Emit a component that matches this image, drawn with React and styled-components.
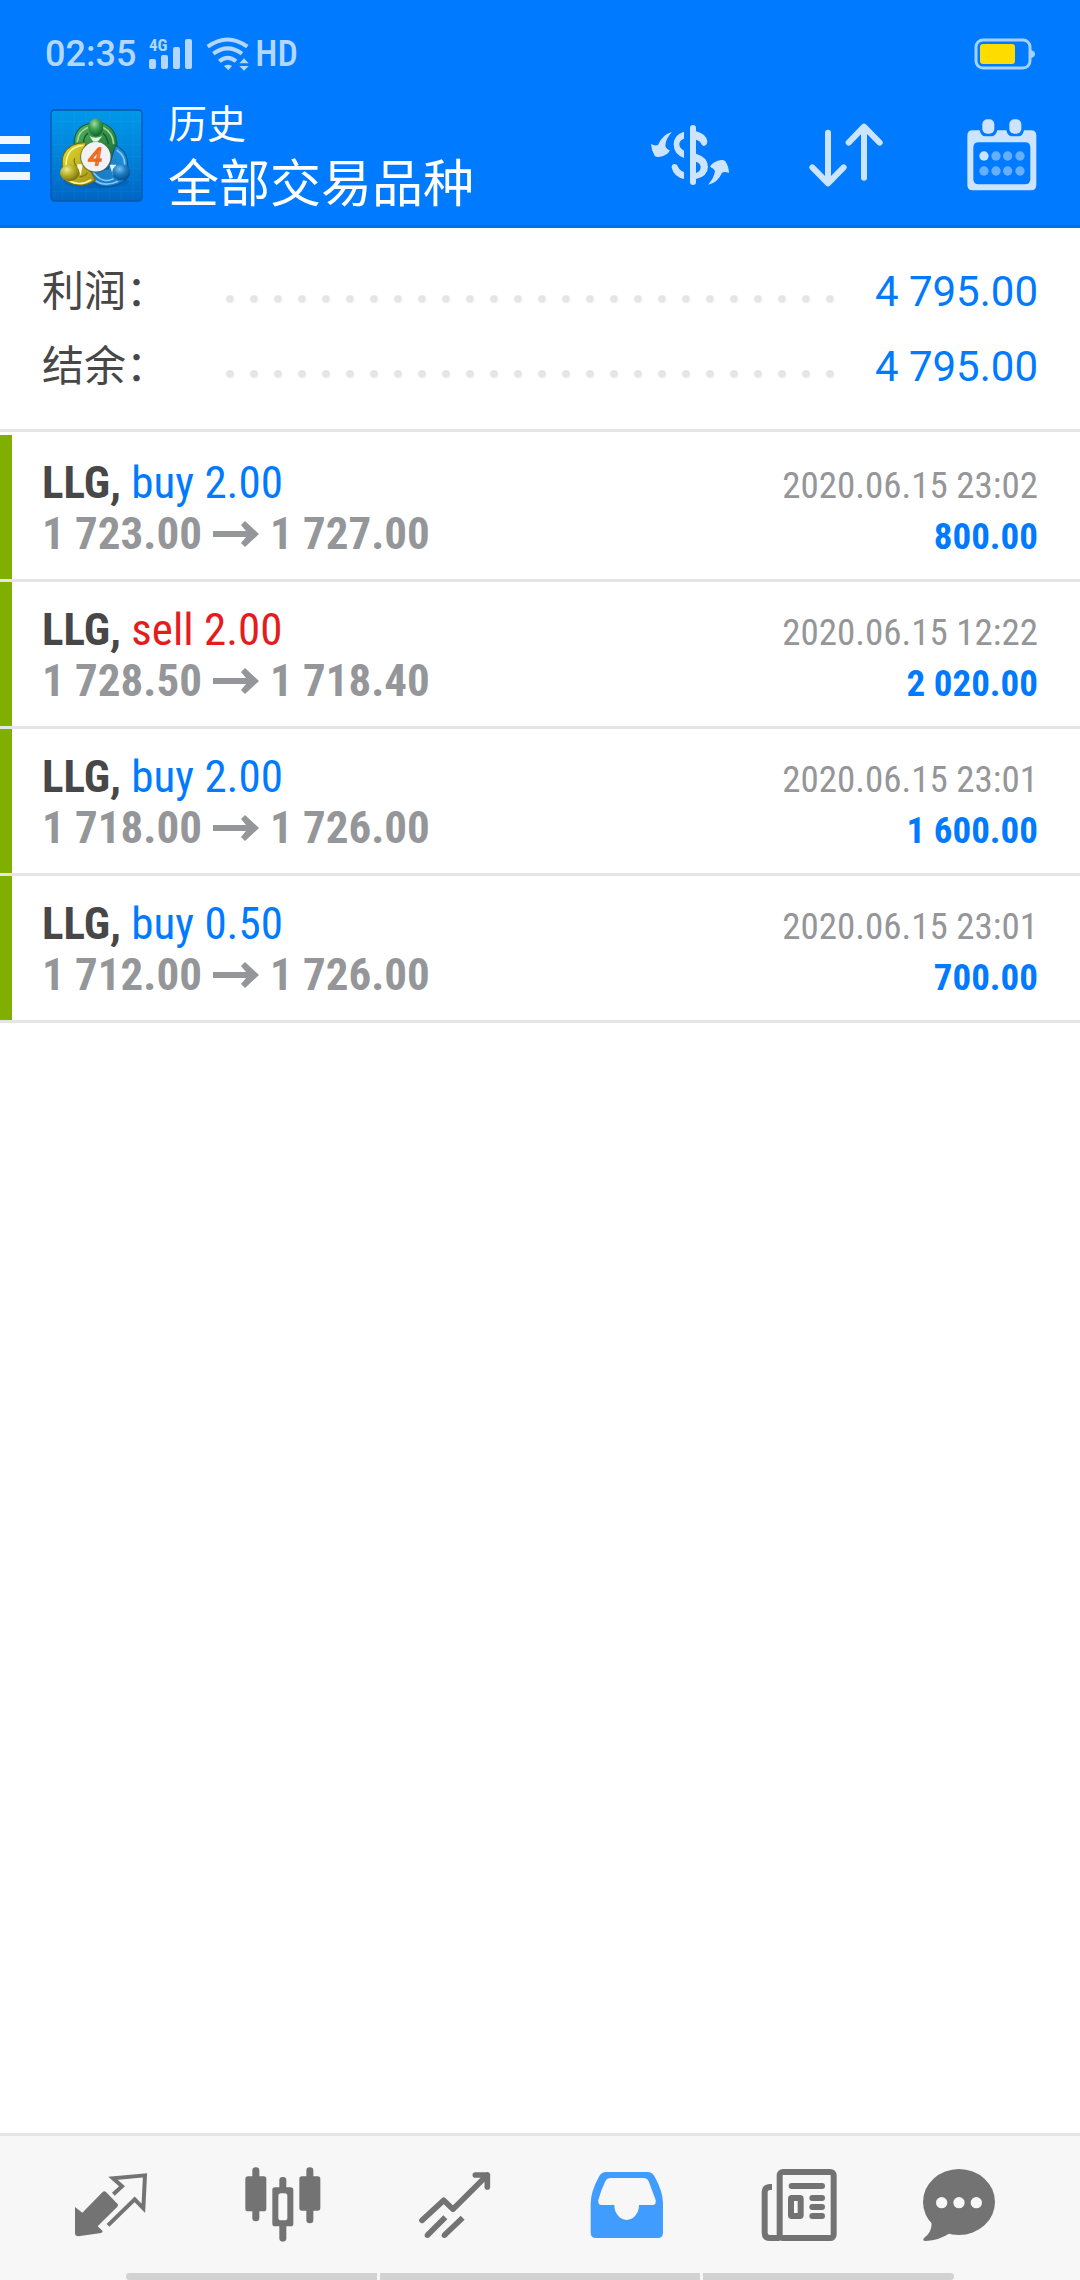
import React, { useState } from "react";
import styled, { createGlobalStyle } from "styled-components";

const condensed = `"Roboto Condensed", "Liberation Sans Narrow", Roboto, sans-serif`;

const GlobalStyle = createGlobalStyle`
  * {
    box-sizing: border-box;
  }

  body {
    margin: 0;
    background: #fff;
    font-family: Roboto, "Noto Sans CJK SC", sans-serif;
  }
`;

const Page = styled.div`
  display: flex;
  flex-direction: column;
  min-height: 100vh;
`;

const Header = styled.header`
  background: #007aff;
  border-bottom: 3px solid #006fe8;
  color: #fff;
`;

const StatusBar = styled.div`
  display: flex;
  align-items: center;
  height: 85px;
  padding: 23px 45px 0 45px;
  color: #b3d7ff;
  font-size: 36px;
  font-weight: 500;
  line-height: 44px;

  svg {
    display: block;
  }
`;

const Clock = styled.time`
  margin-right: 13px;
`;

const Signal = styled.svg`
  margin-right: 11px;
`;

const Network = styled.span`
  flex: 1;
  margin-left: 6px;
  font-family: ${condensed};
  font-weight: 500;
`;

const Toolbar = styled.div`
  display: flex;
  align-items: center;
  height: 140px;
  padding-right: 38px;
`;

const IconButton = styled.button`
  display: flex;
  align-items: center;
  justify-content: center;
  width: 80px;
  height: 96px;
  padding: 0;
  border: 0;
  background: none;
  color: ${props => props.$color || "#cce4ff"};
  cursor: pointer;
`;

const MenuButton = styled(IconButton)`
  width: 30px;
  padding-top: 6px;
`;

const Logo = styled.svg`
  display: block;
  margin: 0 25px 0 20px;
`;

const Titles = styled.div`
  flex: 1;
`;

const Title = styled.h1`
  margin: 0;
  font-size: 39px;
  font-weight: 400;
  line-height: 60px;
`;

const Subtitle = styled.p`
  margin: 0;
  font-size: 51px;
  line-height: 60px;
`;

const Actions = styled.div`
  display: flex;
  gap: 76px;
`;

const Summary = styled.dl`
  margin: 0;
  padding: 26px 42px 25px;
  border-bottom: 3px solid #e5e5e5;
`;

const SummaryRow = styled.div`
  display: flex;
  align-items: center;
  height: 75px;
  font-size: 42px;
  line-height: 60px;

  dt {
    width: 176px;
    color: #474747;
  }

  dd {
    margin: 0 0 0 32px;
    color: #007aff;
  }
`;

const Dots = styled.span`
  flex: 1;
  height: 8px;
  margin-top: 14px;
  background: radial-gradient(circle, #e5e5e5 3px, transparent 5px) 0 0 / 24px
    8px repeat-x;
`;

const Deals = styled.ul`
  flex: 1;
  margin: 0;
  padding: 3px 0 0;
  list-style: none;
`;

const Deal = styled.li`
  border-bottom: 3px solid #e5e5e5;
`;

const DealBody = styled.div`
  padding: 22px 42px 20px 30px;
  border-left: 12px solid #7fb000;
  font-family: ${condensed};
`;

const Line = styled.div`
  display: flex;
  align-items: baseline;
  justify-content: space-between;
  height: 51px;
  font-size: 45px;
  line-height: 51px;
`;

const Symbol = styled.strong`
  color: #474747;
`;

const Side = styled.span`
  color: ${props => (props.$sell ? "#e51c1c" : "#007aff")};
`;

const Prices = styled.strong`
  display: flex;
  align-items: center;
  gap: 11px;
  color: #959699;
`;

const Time = styled.time`
  color: #959699;
  font-size: 37px;
`;

const Profit = styled.strong`
  color: #007aff;
  font-size: 37px;
`;

const BottomBar = styled.footer`
  border-top: 3px solid #e5e5e5;
  background: #f7f7f7;
`;

const Tabs = styled.nav`
  display: grid;
  grid-template-columns: repeat(5, 172fr) 148fr;
  justify-items: center;
  padding: 21px 47px 20px 25px;
`;

const GestureBar = styled.div`
  display: grid;
  grid-template-columns: 251fr 320fr 251fr;
  gap: 3px;
  height: 7px;
  margin: 0 126px;
  border-radius: 4px;
  overflow: hidden;

  span {
    background: #d2d2d2;
  }
`;

const SignalIcon = () => (
  <Signal width="46" height="44" viewBox="0 -6 46 44" fill="currentColor">
    <text x="0" y="13" fontSize="17" fontWeight="700" fontFamily="Roboto Condensed, Roboto">
      4G
    </text>
    <rect x="0" y="21" width="7" height="10" rx="2" />
    <rect x="12" y="17" width="7" height="14" rx="2" />
    <rect x="24" y="9" width="7" height="22" rx="2" />
    <rect x="36" y="1" width="7" height="30" rx="2" />
  </Signal>
);

const WifiIcon = () => (
  <svg width="43" height="34" viewBox="611 52 129 102">
    <g fill="none" stroke="currentColor" strokeWidth="12">
      <path d="M616 81Q676 38 735 81" />
      <path d="M633 102Q676 70 719 102" />
      <path d="M651 125Q676 104 701 125" />
    </g>
    <g fill="currentColor">
      <path d="M665 139Q677 131 689 139L678 152Z" />
      <path d="M711 131L725 116L739 131ZM711 139L725 153L739 139Z" />
    </g>
  </svg>
);

const BatteryIcon = () => (
  <svg width="61" height="32" viewBox="0 0 61 32">
    <rect
      x="2"
      y="2"
      width="54"
      height="28"
      rx="7"
      fill="none"
      stroke="#a6d0ff"
      strokeWidth="3"
    />
    <path d="M57 12Q61 13 61 16T57 20Z" fill="#a6d0ff" />
    <rect x="6" y="6" width="35" height="20" rx="3" fill="#ffdc00" />
  </svg>
);

const MenuIcon = () => (
  <svg width="30" height="44" viewBox="0 0 30 44" fill="#f0f7ff">
    <rect y="0" width="30" height="8" />
    <rect y="18" width="30" height="8" />
    <rect y="36" width="30" height="8" />
  </svg>
);

const AppLogo = () => (
  <Logo width="93" height="93" viewBox="12 13 278 278">
    <defs>
      <linearGradient id="logoSky" x1="0" y1="0" x2="0" y2="1">
        <stop offset="0" stopColor="#0098ea" />
        <stop offset="0.5" stopColor="#0083da" />
        <stop offset="1" stopColor="#0065c4" />
      </linearGradient>
      <linearGradient id="logoGreen" x1="0" y1="0" x2="1" y2="1">
        <stop offset="0" stopColor="#5db262" />
        <stop offset="1" stopColor="#127030" />
      </linearGradient>
      <linearGradient id="logoYellow" x1="0" y1="0" x2="1" y2="1">
        <stop offset="0" stopColor="#e6dc2c" />
        <stop offset="1" stopColor="#a0901a" />
      </linearGradient>
      <linearGradient id="logoBlue" x1="1" y1="0" x2="0" y2="1">
        <stop offset="0" stopColor="#2291da" />
        <stop offset="1" stopColor="#1673bd" />
      </linearGradient>
      <radialGradient id="headGreen" cx="0.4" cy="0.3" r="0.7">
        <stop offset="0" stopColor="#a4dba0" />
        <stop offset="0.5" stopColor="#3a9c50" />
        <stop offset="1" stopColor="#0f672f" />
      </radialGradient>
      <radialGradient id="headYellow" cx="0.35" cy="0.3" r="0.7">
        <stop offset="0" stopColor="#eeea8a" />
        <stop offset="0.5" stopColor="#b9b02b" />
        <stop offset="1" stopColor="#7b7312" />
      </radialGradient>
      <radialGradient id="headBlue" cx="0.4" cy="0.3" r="0.7">
        <stop offset="0" stopColor="#75c1ee" />
        <stop offset="0.5" stopColor="#1f7cc3" />
        <stop offset="1" stopColor="#07508f" />
      </radialGradient>
    </defs>
    <rect
      x="15"
      y="16"
      width="272"
      height="272"
      rx="11"
      fill="url(#logoSky)"
      stroke="#0557ad"
      strokeWidth="4"
    />
    <path
      d="M50 18V286M85 18V286M120 18V286M155 18V286M190 18V286M225 18V286M260 18V286M17 50H285M17 85H285M17 120H285M17 155H285M17 190H285M17 225H285M17 260H285"
      stroke="#fff"
      strokeOpacity="0.06"
      strokeWidth="2"
    />
    <ellipse cx="150" cy="230" rx="98" ry="20" fill="#004f9e" fillOpacity="0.35" />
    <path
      d="M84 118Q84 66 130 56H170Q212 70 212 122Q212 146 194 168L112 150Q86 140 84 118Z"
      fill="url(#logoGreen)"
      stroke="#0c5f35"
      strokeWidth="3"
    />
    <path
      d="M94 110Q97 80 124 69M172 69Q200 84 202 116"
      fill="none"
      stroke="#a0d99a"
      strokeWidth="5"
      strokeLinecap="round"
    />
    <path
      d="M126 85Q112 96 112 116M170 85Q184 98 186 118"
      fill="none"
      stroke="#0d6030"
      strokeWidth="4"
    />
    <path
      d="M208 122Q246 140 244 184Q260 216 222 234Q176 258 142 232Q122 214 118 192H186Z"
      fill="url(#logoBlue)"
      stroke="#0b5297"
      strokeWidth="3"
    />
    <path
      d="M213 137Q236 152 235 178M132 212Q164 252 214 230M142 203Q168 238 200 222"
      fill="none"
      stroke="#7bc8f2"
      strokeWidth="5"
      strokeLinecap="round"
    />
    <path
      d="M120 114Q72 112 53 148Q45 170 51 190Q40 217 63 230Q104 254 148 226L134 200L108 160Z"
      fill="url(#logoYellow)"
      stroke="#736b13"
      strokeWidth="3"
    />
    <path
      d="M110 122Q61 126 60 180M72 229Q104 244 134 225"
      fill="none"
      stroke="#fbf59b"
      strokeWidth="5"
      strokeLinecap="round"
    />
    <path
      d="M86 160Q80 172 92 184M100 215Q112 218 124 204"
      fill="none"
      stroke="#827916"
      strokeWidth="4"
    />
    <path d="M130 94Q148 104 168 94L154 112H142Z" fill="#def5df" />
    <path d="M92 178L110 178L104 212Z" fill="#fbfae0" />
    <path d="M190 180L210 180L200 210Z" fill="#e0f3ff" />
    <ellipse cx="149" cy="68" rx="22" ry="27" fill="url(#headGreen)" />
    <ellipse cx="71" cy="204" rx="29" ry="25" fill="url(#headYellow)" />
    <ellipse cx="225" cy="202" rx="27" ry="24" fill="url(#headBlue)" />
    <circle cx="149" cy="157" r="47" fill="#4d5633" fillOpacity="0.6" />
    <circle cx="149" cy="156" r="44" fill="#f1f1f6" />
    <text
      x="147"
      y="181"
      textAnchor="middle"
      fontFamily="Roboto"
      fontSize="74"
      fontStyle="italic"
      fill="#ffa63e"
      stroke="#e8651a"
      strokeWidth="4"
    >
      4
    </text>
  </Logo>
);

const CurrencyIcon = () => (
  <svg width="80" height="62" viewBox="90 309 240 186" fill="currentColor">
    <rect x="210" y="312" width="18" height="180" rx="9" />
    <path d="M192 332V353Q178 358 178 370Q178 382 192 389V411Q161 400 161 370Q161 341 192 332Z" />
    <path d="M192 474V453Q179 449 174 437Q172 429 164 429Q154 430 155 440Q162 467 192 474Z" />
    <path d="M228 331Q257 338 262 360Q262 374 251 375Q246 374 244 369Q240 359 228 356Z" />
    <path d="M228 398Q264 409 264 437Q263 466 228 474V456Q242 451 242 439Q242 427 228 422Z" />
    <path d="M156 333Q127 340 114 372Q105 376 93 369Q94 388 104 404Q108 409 115 408Q142 405 150 388Q138 384 136 374Q137 353 156 333Z" />
    <path d="M264 491Q293 486 306 455Q315 450 327 456Q326 436 316 421Q312 416 304 417Q280 420 270 437Q282 442 285 450Q283 470 264 491Z" />
  </svg>
);

const SortIcon = () => (
  <svg
    width="74"
    height="64"
    viewBox="567 310 222 192"
    fill="none"
    stroke="currentColor"
    strokeWidth="18"
    strokeLinecap="round"
    strokeLinejoin="round"
  >
    <path d="M624 339V490M577 443L624 491L671 443" />
    <path d="M732 474V322M686 369L732 321L779 369" />
  </svg>
);

const CalendarIcon = () => (
  <svg width="70" height="72" viewBox="1043 296 210 216" fill="currentColor">
    <path
      fillRule="evenodd"
      d="M1060 330H1081Q1085 348 1098 348H1116Q1129 348 1134 330H1161Q1165 348 1178 348H1198Q1210 348 1214 330H1235Q1251 330 1251 346V494Q1251 510 1235 510H1060Q1044 510 1044 494V346Q1044 330 1060 330ZM1078 366Q1062 366 1062 382V476Q1062 492 1078 492H1217Q1233 492 1233 476V382Q1233 366 1217 366Z"
    />
    <rect x="1089" y="297" width="36" height="43" rx="15" />
    <rect x="1170" y="297" width="36" height="43" rx="15" />
    <circle cx="1094" cy="407" r="14" />
    <g fill="#66afff">
      <circle cx="1130" cy="407" r="14" />
      <circle cx="1165" cy="407" r="14" />
      <circle cx="1202" cy="407" r="14" />
      <circle cx="1094" cy="452" r="14" />
      <circle cx="1130" cy="452" r="14" />
      <circle cx="1165" cy="452" r="14" />
      <circle cx="1202" cy="452" r="14" />
    </g>
  </svg>
);

const ArrowIcon = () => (
  <svg width="46" height="28" viewBox="0 0 46 28">
    <path d="M0 11H33L28 5L32 1L46 14L32 27L28 23L33 17H0Z" fill="#959699" />
  </svg>
);

const QuotesIcon = () => (
  <svg width="74" height="64" viewBox="219 164 222 192">
    <path
      d="M222 266L244 283L305 221Q310 217 315 221L350 257Q353 261 349 265L290 324L305 338Q305 343 300 344L232 354Q222 353 222 345Z"
      fill="currentColor"
    />
    <path
      d="M337 228L363 204L336 180L432 171L427 270L401 243L321 321"
      fill="none"
      stroke="currentColor"
      strokeWidth="12"
    />
  </svg>
);

const ChartIcon = () => (
  <svg width="76" height="76" viewBox="731 146 228 228" fill="currentColor">
    <rect x="753" y="147" width="21" height="162" rx="10" />
    <rect x="732" y="174" width="63" height="105" rx="8" />
    <rect x="834" y="176" width="21" height="194" rx="10" />
    <rect x="813" y="207" width="63" height="117" rx="8" />
    <rect x="831" y="225" width="27" height="81" rx="8" fill="#f7f7f7" />
    <rect x="915" y="147" width="21" height="168" rx="10" />
    <rect x="894" y="174" width="63" height="103" rx="8" />
  </svg>
);

const TradeIcon = () => (
  <svg
    width="72"
    height="66"
    viewBox="173 156 216 198"
    fill="none"
    stroke="currentColor"
    strokeWidth="17"
    strokeLinejoin="round"
  >
    <path d="M182 301L247 241L275 268L378 165M342 165H378V201" strokeLinecap="round" />
    <path d="M198 346L252 292M249 346L304 293" />
    <g fill="currentColor" stroke="none">
      <circle cx="198" cy="346" r="8" />
      <circle cx="249" cy="346" r="8" />
    </g>
  </svg>
);

const HistoryIcon = () => (
  <svg width="74" height="66" viewBox="689 156 222 198" fill="currentColor">
    <path
      fillRule="evenodd"
      d="M738 156H862Q874 156 882 168Q908 215 908 250V338Q908 354 892 354H707Q691 354 691 338V250Q691 215 717 168Q724 156 738 156ZM752 174Q740 174 735 184Q722 210 714 240Q712 255 724 255H762A37 45 0 0 0 836 255H877Q888 255 886 240L865 184Q860 174 848 174Z"
    />
  </svg>
);

const NewsIcon = () => (
  <svg
    width="76"
    height="72"
    viewBox="126 147 228 216"
    fill="none"
    stroke="currentColor"
    strokeWidth="18"
  >
    <rect x="182" y="156" width="162" height="198" rx="10" />
    <path d="M159 201H153Q137 202 137 215V338Q137 354 153 354H182" />
    <path d="M218 198H309M280 234H309M280 261H309M280 288H309" strokeLinecap="round" />
    <rect x="216" y="234" width="29" height="54" rx="2" />
  </svg>
);

const MailIcon = () => (
  <svg width="72" height="72" viewBox="606 147 216 216" fill="currentColor">
    <ellipse cx="714" cy="246" rx="108" ry="99" />
    <path d="M630 300Q638 332 609 354Q603 363 614 363Q656 361 686 340Z" />
    <g fill="#f7f7f7">
      <circle cx="662" cy="248" r="17" />
      <circle cx="714" cy="248" r="17" />
      <circle cx="766" cy="248" r="17" />
    </g>
  </svg>
);

const summary = [
  { label: "利润：", value: "4 795.00" },
  { label: "结余：", value: "4 795.00" }
];

const deals = [
  {
    side: "buy",
    volume: "2.00",
    open: "1 723.00",
    close: "1 727.00",
    time: "2020.06.15 23:02",
    profit: "800.00"
  },
  {
    side: "sell",
    volume: "2.00",
    open: "1 728.50",
    close: "1 718.40",
    time: "2020.06.15 12:22",
    profit: "2 020.00"
  },
  {
    side: "buy",
    volume: "2.00",
    open: "1 718.00",
    close: "1 726.00",
    time: "2020.06.15 23:01",
    profit: "1 600.00"
  },
  {
    side: "buy",
    volume: "0.50",
    open: "1 712.00",
    close: "1 726.00",
    time: "2020.06.15 23:01",
    profit: "700.00"
  }
];

const tabs = [
  { name: "行情", Icon: QuotesIcon },
  { name: "图表", Icon: ChartIcon },
  { name: "交易", Icon: TradeIcon },
  { name: "历史", Icon: HistoryIcon },
  { name: "新闻", Icon: NewsIcon },
  { name: "信息", Icon: MailIcon }
];

const App = () => {
  const [activeTab, setActiveTab] = useState("历史");

  return (
    <Page>
      <GlobalStyle />
      <Header>
        <StatusBar>
          <Clock>02:35</Clock>
          <SignalIcon />
          <WifiIcon />
          <Network>HD</Network>
          <BatteryIcon />
        </StatusBar>
        <Toolbar>
          <MenuButton aria-label="菜单">
            <MenuIcon />
          </MenuButton>
          <AppLogo />
          <Titles>
            <Title>历史</Title>
            <Subtitle>全部交易品种</Subtitle>
          </Titles>
          <Actions>
            <IconButton aria-label="交易品种">
              <CurrencyIcon />
            </IconButton>
            <IconButton aria-label="排序">
              <SortIcon />
            </IconButton>
            <IconButton aria-label="日期">
              <CalendarIcon />
            </IconButton>
          </Actions>
        </Toolbar>
      </Header>

      <Summary>
        {summary.map(item => (
          <SummaryRow key={item.label}>
            <dt>{item.label}</dt>
            <Dots />
            <dd>{item.value}</dd>
          </SummaryRow>
        ))}
      </Summary>

      <Deals>
        {deals.map((deal, index) => (
          <Deal key={index}>
            <DealBody>
              <Line>
                <span>
                  <Symbol>LLG,</Symbol>{" "}
                  <Side $sell={deal.side === "sell"}>
                    {deal.side} {deal.volume}
                  </Side>
                </span>
                <Time>{deal.time}</Time>
              </Line>
              <Line>
                <Prices>
                  {deal.open}
                  <ArrowIcon />
                  {deal.close}
                </Prices>
                <Profit>{deal.profit}</Profit>
              </Line>
            </DealBody>
          </Deal>
        ))}
      </Deals>

      <BottomBar>
        <Tabs>
          {tabs.map(({ name, Icon }) => (
            <IconButton
              key={name}
              aria-label={name}
              $color={activeTab === name ? "#409cff" : "#737373"}
              onClick={() => setActiveTab(name)}
            >
              <Icon />
            </IconButton>
          ))}
        </Tabs>
        <GestureBar>
          <span />
          <span />
          <span />
        </GestureBar>
      </BottomBar>
    </Page>
  );
};

export default App;
